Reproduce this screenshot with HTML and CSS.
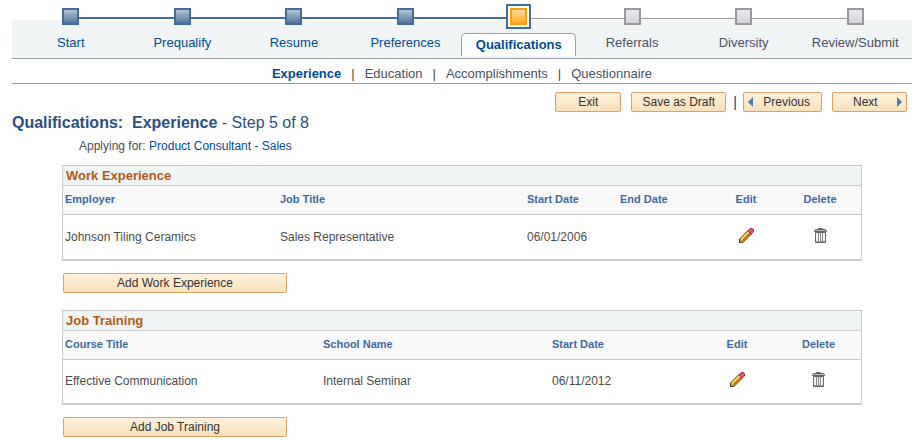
FILE: index.html
```html
<!DOCTYPE html>
<html lang="en">
<head>
  <meta charset="UTF-8">
  <meta name="viewport" content="width=device-width, initial-scale=1.0">
  <title>Qualifications: Experience</title>
  <link rel="stylesheet" href="styles.css">
</head>
<body>
  <!-- shared icons -->
  <svg class="sprite" aria-hidden="true">
    <symbol id="icon-pencil" viewBox="0 0 15 15">
      <path d="M0.5 14.5V11L9 2.5L12.5 6L4 14.5Z" fill="#dca028" stroke="#6b4708"/>
      <path d="M2 11.5L9.500 4" stroke="#f7dc86" stroke-width="1.500" fill="none"/>
      <path d="M3.500 13L11.500 5" stroke="#b07a14" stroke-width="1.500" fill="none"/>
      <path d="M9 3L11 0.500H13.500L14.500 1.500V4L12 6Z" fill="#e0566c" stroke="#b02c46"/>
      <path d="M0 12.500V15H2.500Z" fill="#1f4054"/>
    </symbol>
    <symbol id="icon-trash" viewBox="0 0 13 15">
      <path d="M4.500 2V0.500H8.500V2" fill="none" stroke="#666"/>
      <path d="M0.500 3.500V2.500L2 1.500H11L12.500 2.500V3.500Z" fill="#bbb" stroke="#666"/>
      <path d="M1.500 4.500H11.500V14.500H1.500Z" fill="#f2f2f2" stroke="#666"/>
      <path d="M4.500 5V13M6.500 5V13M8.500 5V13" stroke="#888"/>
      <path d="M2 13.500H11" stroke="#999"/>
    </symbol>
  </svg>

  <nav>
    <ol class="steps">
      <li class="done"><span class="marker"></span><a href="#">Start</a></li>
      <li class="done"><span class="marker"></span><a href="#">Prequalify</a></li>
      <li class="done"><span class="marker"></span><a href="#">Resume</a></li>
      <li class="done"><span class="marker"></span><a href="#">Preferences</a></li>
      <li class="current"><span class="marker"></span><a href="#" aria-current="step">Qualifications</a></li>
      <li><span class="marker"></span><a href="#">Referrals</a></li>
      <li><span class="marker"></span><a href="#">Diversity</a></li>
      <li><span class="marker"></span><a href="#">Review/Submit</a></li>
    </ol>
    <div class="subnav">
      <a href="#" class="active">Experience</a><span>|</span>
      <a href="#">Education</a><span>|</span>
      <a href="#">Accomplishments</a><span>|</span>
      <a href="#">Questionnaire</a>
    </div>
  </nav>

  <main>
    <div class="toolbar">
      <button type="button" class="exit">Exit</button>
      <button type="button" class="save">Save as Draft</button>
      <span class="separator">|</span>
      <button type="button" class="previous"><svg width="5" height="10" viewBox="0 0 5 10"><path d="M5 0V10L0 5Z" fill="#4a7db5"/></svg>Previous</button>
      <button type="button" class="next">Next<svg width="5" height="10" viewBox="0 0 5 10"><path d="M0 0V10L5 5Z" fill="#4a7db5"/></svg></button>
    </div>

    <h1>Qualifications: &nbsp;Experience <span>- Step 5 of 8</span></h1>
    <p class="applying">Applying for: <a href="#">Product Consultant - Sales</a></p>

    <section>
      <div class="panel">
        <h2>Work Experience</h2>
        <table>
          <colgroup>
            <col class="employer"><col class="job"><col class="date"><col class="date"><col class="edit"><col class="delete">
          </colgroup>
          <thead>
            <tr><th>Employer</th><th>Job Title</th><th>Start Date</th><th>End Date</th><th class="center">Edit</th><th class="center">Delete</th></tr>
          </thead>
          <tbody>
            <tr>
              <td>Johnson Tiling Ceramics</td>
              <td>Sales Representative</td>
              <td>06/01/2006</td>
              <td></td>
              <td class="center"><button type="button" class="icon" aria-label="Edit"><svg width="15" height="15"><use href="#icon-pencil"/></svg></button></td>
              <td class="center"><button type="button" class="icon" aria-label="Delete"><svg width="13" height="15"><use href="#icon-trash"/></svg></button></td>
            </tr>
          </tbody>
        </table>
      </div>
      <button type="button" class="add">Add Work Experience</button>
    </section>

    <section>
      <div class="panel">
        <h2>Job Training</h2>
        <table>
          <colgroup>
            <col class="course"><col class="school"><col class="training-date"><col class="training-edit"><col class="delete">
          </colgroup>
          <thead>
            <tr><th>Course Title</th><th>School Name</th><th>Start Date</th><th class="center">Edit</th><th class="center">Delete</th></tr>
          </thead>
          <tbody>
            <tr>
              <td>Effective Communication</td>
              <td>Internal Seminar</td>
              <td>06/11/2012</td>
              <td class="center"><button type="button" class="icon" aria-label="Edit"><svg width="15" height="15"><use href="#icon-pencil"/></svg></button></td>
              <td class="center"><button type="button" class="icon" aria-label="Delete"><svg width="13" height="15"><use href="#icon-trash"/></svg></button></td>
            </tr>
          </tbody>
        </table>
      </div>
      <button type="button" class="add">Add Job Training</button>
    </section>
  </main>
</body>
</html>
```
FILE: styles.css
```css
*,
*::before,
*::after {
  box-sizing: border-box;
}
body {
  margin: 0;
  padding: 4px 7px 0 12px;
  background-color: #fff;
  color: #4c4c4c;
  font-family: Arial, "Liberation Sans", sans-serif;
  font-size: 12px;
}
a {
  color: #004b91;
  text-decoration: none;
}
.sprite {
  display: none;
}

/* progress steps */
.steps {
  display: grid;
  grid-template-columns: repeat(8, 1fr);
  height: 55px;
  margin: 0;
  padding: 0 1px 0 3px;
  list-style: none;
  font-size: 13px;
  background: linear-gradient(transparent 16px, #f0f4f5 16px);
  border-bottom: 1px solid #9a9fa9;
}
.steps li {
  position: relative;
  display: flex;
  flex-direction: column;
  align-items: center;
}
.steps li::after {
  content: "";
  position: absolute;
  top: 14px;
  left: 50%;
  width: 100%;
  height: 1px;
  background-color: #999;
}
.steps .done::after {
  top: 13px;
  height: 2px;
  background-color: #446b95;
}
.steps li:last-child::after {
  display: none;
}
.marker {
  position: relative;
  z-index: 1;
  width: 17px;
  height: 17px;
  margin: 4px 0;
  border: 2px solid #999;
  background: linear-gradient(#e8eaee, #d0d3d9);
}
.done .marker {
  border-color: #446b95;
  background: linear-gradient(#b4c3d8, #54779f);
}
.current .marker {
  width: 25px;
  height: 25px;
  margin: 0;
  padding: 2px;
  border-color: #446b95;
  background: #fff;
}
.current .marker::before {
  content: "";
  display: block;
  height: 17px;
  border: 2px solid #ff9c0c;
  background: linear-gradient(#ffdf9a, #ffa826);
}
.steps a {
  margin-top: 5px;
  line-height: 18px;
  color: #4a5064;
}
.steps .done a {
  color: #004b91;
}
.steps .current a {
  width: 115px;
  height: 23px;
  margin-top: 4px;
  border: 1px solid #9a9fa9;
  border-bottom: none;
  border-radius: 5px 5px 0 0;
  background-color: #fff;
  color: #004b91;
  font-weight: bold;
  line-height: 22px;
  text-align: center;
}
.subnav {
  display: flex;
  justify-content: center;
  height: 25px;
  border-bottom: 1px solid #999;
  font-size: 13px;
  line-height: 29px;
}
.subnav a {
  color: #4a5064;
}
.subnav span {
  margin: 0 10px;
}
.subnav .active {
  color: #004b91;
  font-weight: bold;
}

/* buttons */
button {
  height: 20px;
  padding: 0;
  border: 1px solid #d8a26c;
  border-radius: 2px;
  background: linear-gradient(#fdf0dc, #f9e2ba);
  color: #333;
  font-family: inherit;
  font-size: 12px;
  cursor: pointer;
}
.toolbar {
  display: flex;
  justify-content: flex-end;
  padding: 8px 5px 0 0;
}
.exit {
  width: 66px;
  margin-right: 10px;
}
.save {
  width: 95px;
}
.separator {
  margin: 0 6px 0 7px;
  color: #004b91;
  font-size: 14px;
  line-height: 20px;
}
.previous,
.next {
  display: flex;
  align-items: center;
  justify-content: space-between;
}
.previous {
  width: 79px;
  margin-right: 10px;
  padding: 0 11px 0 4px;
}
.next {
  width: 75px;
  padding: 0 4px 0 20px;
}

h1 {
  margin: 0;
  color: #2c4f85;
  font-size: 16px;
  line-height: 22px;
}
h1 span {
  font-weight: normal;
}
.applying {
  margin: 4px 0 11px 67px;
  line-height: 16px;
}

/* data panels */
section {
  max-width: 800px;
  margin: 0 0 17px 50px;
}
.panel {
  border: 1px solid #c9cbd0;
  border-bottom-width: 2px;
}
h2 {
  margin: 0;
  padding-left: 3px;
  background-color: #f0f4f5;
  color: #b35c17;
  font-size: 13px;
  line-height: 19px;
}
table {
  width: 100%;
  border-collapse: collapse;
  table-layout: fixed;
}
th {
  height: 29px;
  padding: 0 2px 2px;
  border-top: 1px solid #c9cbd0;
  border-bottom: 1px solid #c9cbd0;
  background-color: #f9f9f9;
  color: #426a9c;
  font-size: 11px;
  text-align: left;
}
th:last-child,
td:last-child {
  padding-right: 4px;
}
td {
  height: 44px;
  padding: 0 2px;
}
td.center {
  padding-bottom: 3px;
}
.center {
  text-align: center;
}
.employer {
  width: 215px;
}
.job {
  width: 247px;
}
.date {
  width: 93px;
}
.edit {
  width: 70px;
}
.course {
  width: 258px;
}
.school {
  width: 229px;
}
.training-date {
  width: 146px;
}
.training-edit {
  width: 82px;
}
.icon {
  height: auto;
  border: none;
  background: none;
  vertical-align: middle;
}
.icon svg {
  display: block;
}
.add {
  display: block;
  width: 224px;
  margin: 12px 0 0 1px;
}
```
